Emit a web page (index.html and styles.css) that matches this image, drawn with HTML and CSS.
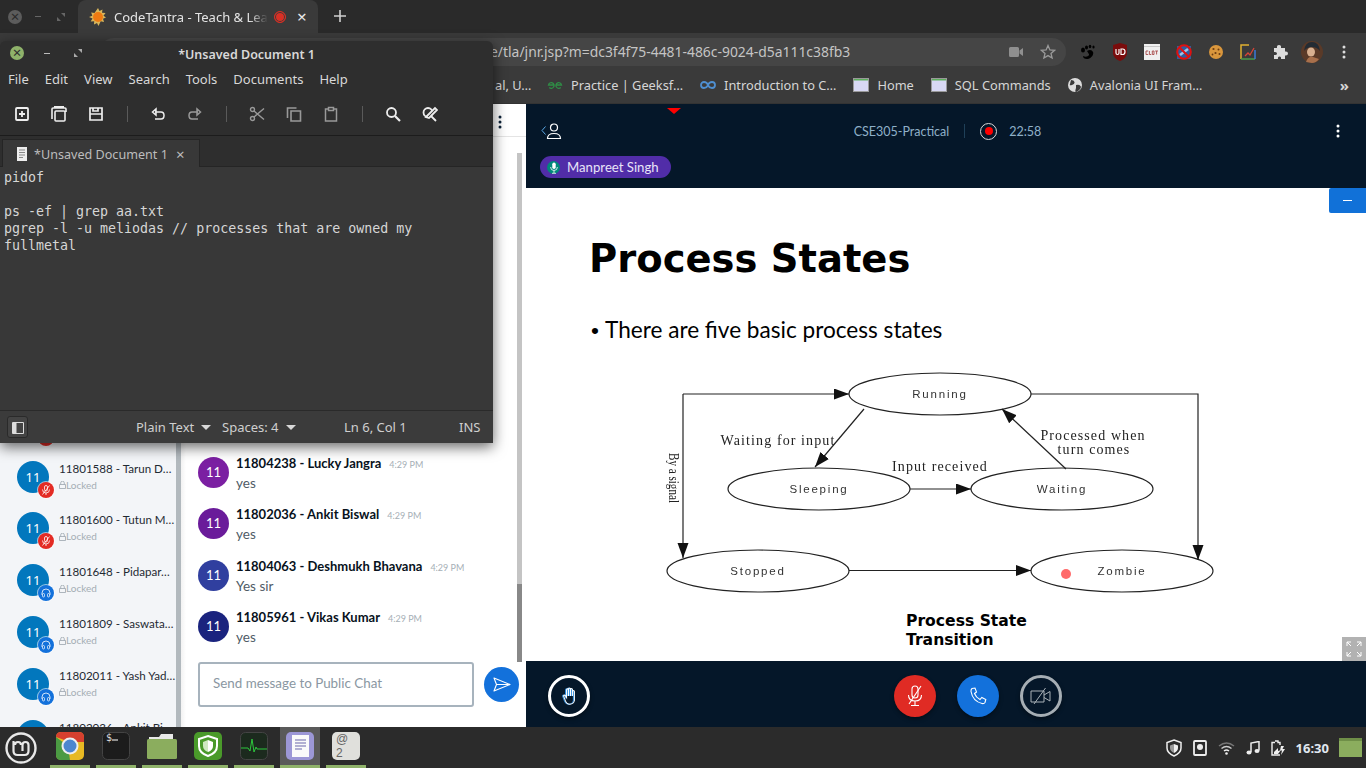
FILE: index.html
```html
<!DOCTYPE html>
<html lang="en">
<head>
    <meta charset="UTF-8">
    <title>CodeTantra - Teach &amp; Learn</title>
    <link rel="stylesheet" href="styles.css">
</head>
<body>
    <div class="browser">
        <div class="tabstrip">
            <div class="win-btns">
                <span class="win-close">&#215;</span>
                <span class="win-min"></span>
                <svg class="win-max" width="8" height="8" viewBox="0 0 8 8"><path d="M4 0h4v4zM0 4l4 4H0z" fill="#666"/></svg>
            </div>
            <div class="tab">
                <svg width="18" height="18" viewBox="0 0 18 18"><path d="M9 0l1.500 3 3-1.500-.5 3.300 3.500.2-2 2.700 2.500 1.800-3 1.200 1 3.200-3.300-.6L9.500 18 8 15l-3 1.500.2-3.300-3.500.2 1.800-2.900L0 9l3.300-1.300-1.100-3.200 3.300.5z" fill="#d9b65a"/><circle cx="9" cy="9" r="5" fill="#ee7a12"/></svg>
                <span class="tab-title">CodeTantra - Teach &amp; Lear</span>
                <span class="tab-rec"></span>
                <span class="tab-x">&#215;</span>
            </div>
            <svg class="new-tab" width="12" height="12" viewBox="0 0 12 12"><path d="M6 0v12M0 6h12" stroke="#d0d0d0" stroke-width="1.600"/></svg>
        </div>

        <div class="addressbar">
            <div class="omnibox">
                <span class="url">e/tla/jnr.jsp?m=dc3f4f75-4481-486c-9024-d5a111c38fb3</span>
                <svg width="14" height="10" viewBox="0 0 14 10"><path d="M0 1.500Q0 0 1.500 0h7Q10 0 10 1.500v7Q10 10 8.500 10h-7Q0 10 0 8.500zM10.500 3.500L14 1v8l-3.500-2.500z" fill="#8f8f8f"/></svg>
                <svg width="16" height="16" viewBox="0 0 16 16"><path d="M8 1.500l1.900 4.400 4.700.4-3.600 3.100 1.100 4.600L8 11.600 3.900 14 5 9.400 1.400 6.300l4.700-.4z" fill="none" stroke="#9a9a9a" stroke-width="1.300"/></svg>
            </div>
            <div class="extensions">
                <svg width="16" height="16" viewBox="0 0 16 16"><path d="M7 7c3-2 5-1 6 1s-1 6-5 7c-3 .5-5-1-5-3 2 1 5 1 6-1 .500-1-1-2-2-4z" fill="#000"/><ellipse cx="3" cy="6" rx="2" ry="2.500" fill="#000"/><ellipse cx="6.500" cy="3.500" rx="1.500" ry="2" fill="#000"/><ellipse cx="10" cy="2.500" rx="1.300" ry="1.700" fill="#000"/><ellipse cx="13.500" cy="3" rx="1.100" ry="1.500" fill="#000"/></svg>
                <svg width="16" height="18" viewBox="0 0 16 18"><path d="M8 0l7 2v8c0 4-4 7-7 8-3-1-7-4-7-8V2z" fill="#7a0c0c"/><path d="M4 6v4q0 1.500 1.500 1.500T7 10V6M9 6v5.500h1.500Q13 11.500 13 8.700T10.500 6z" fill="none" stroke="#fff" stroke-width="1.200"/></svg>
                <svg width="16" height="16" viewBox="0 0 16 16"><rect width="16" height="16" fill="#f0f0f0"/><path d="M0 2.500h16" stroke="#c8c8c8"/><path d="M2 7h2.200M2 7v3.500h2.200M5.400 7v3.500h1.800M8.300 7h1.700v3.500H8.300zM11.200 7H14M12.600 7v3.500" fill="none" stroke="#a84a4a" stroke-width=".9"/></svg>
                <svg width="16" height="16" viewBox="0 0 16 16"><rect x="1" y="2" width="14" height="13" fill="#2f5d9e"/><path d="M4 11l8-6" stroke="#9cc3ea" stroke-width="2.500"/><circle cx="8" cy="8" r="6.800" fill="none" stroke="#e01010" stroke-width="2"/><path d="M3.300 3.300l9.400 9.400" stroke="#e01010" stroke-width="2"/></svg>
                <svg width="16" height="16" viewBox="0 0 16 16"><circle cx="8" cy="8" r="7" fill="#d9963c"/><circle cx="5.500" cy="5" r="1.100" fill="#6b3c12"/><circle cx="10.500" cy="5.500" r="1" fill="#6b3c12"/><circle cx="7.500" cy="9" r="1.100" fill="#6b3c12"/><circle cx="11.500" cy="10" r="1" fill="#6b3c12"/><circle cx="4.500" cy="10.500" r=".9" fill="#6b3c12"/></svg>
                <svg width="16" height="16" viewBox="0 0 16 16"><path d="M9 1H1v14" fill="none" stroke="#e0b030" stroke-width="1.500"/><path d="M1 15h14" fill="none" stroke="#4a9a4a" stroke-width="1.500"/><path d="M15 15V6" fill="none" stroke="#3b78d8" stroke-width="1.500"/><path d="M5 12l3-3 2 2 4-7" fill="none" stroke="#d84437" stroke-width="1.300"/></svg>
                <svg width="16" height="16" viewBox="0 0 16 16"><path d="M2 4h3q-.5-3 2-3t2 3h4v3.500q3-.5 3 2t-3 2V15H9q.5-2.500-1.500-2.500T6 15H2v-4q3 .5 3-1.500T2 8z" fill="#dcdcdc"/></svg>
                <svg class="ext-profile" width="22" height="22" viewBox="0 0 22 22"><circle cx="11" cy="11" r="11" fill="#5a3a28"/><path d="M3 10Q4 1 11 1t8 9q-3-4-8-4t-8 4z" fill="#232b33"/><ellipse cx="10" cy="11" rx="4" ry="4.500" fill="#d8b090"/><path d="M5 21q2-6 7-5l6 2q-3 4-7 4z" fill="#a8704c"/></svg>
                <svg class="ext-menu" width="4" height="14" viewBox="0 0 4 14"><circle cx="2" cy="2" r="1.500" fill="#ddd"/><circle cx="2" cy="7" r="1.500" fill="#ddd"/><circle cx="2" cy="12" r="1.500" fill="#ddd"/></svg>
            </div>
        </div>

        <div class="bookmarks">
            <div class="bm bm-cut">al, U&#8230;</div>
            <div class="bm">
                <svg width="16" height="8" viewBox="0 0 16 8"><path d="M7 4H1.500a2.800 2.800 0 1 1 .8 2.500M9 4h5.500a2.800 2.800 0 1 0-.8 2.500" fill="none" stroke="#2f8d46" stroke-width="1.300"/></svg>
                Practice | Geeksf&#8230;
            </div>
            <div class="bm">
                <svg width="16" height="8" viewBox="0 0 16 8"><path d="M8 4C7 1.500 5.500 1 4 1a3 3 0 0 0 0 6c1.500 0 3-.500 4-3s2.500-3 4-3a3 3 0 0 1 0 6c-1.500 0-3-.500-4-3z" fill="none" stroke="#4f8fd0" stroke-width="1.800"/></svg>
                Introduction to C&#8230;
            </div>
            <div class="bm">
                <svg width="16" height="14" viewBox="0 0 16 14"><use href="#page-icon"/></svg>
                Home
            </div>
            <div class="bm">
                <svg width="16" height="14" viewBox="0 0 16 14"><use href="#page-icon"/></svg>
                SQL Commands
            </div>
            <div class="bm">
                <svg width="14" height="14" viewBox="0 0 14 14"><circle cx="7" cy="7" r="7" fill="#dcdcdc"/><path d="M3 2q3 0 3.500 2T4 7 2 6zM8 7q3-1 4.500 1T10 13 8 10z" fill="#3a3a3a"/></svg>
                Avalonia UI Fram&#8230;
            </div>
            <div class="bm-more">&#187;</div>
        </div>

        <div class="app">
            <aside class="userlist">
                <div class="user">
                    <div class="user-avatar">11<span class="badge badge-muted"><svg width="10" height="10" viewBox="0 0 10 10"><use href="#mic-off"/></svg></span></div>
                </div>
                <div class="user">
                    <div class="user-avatar">11<span class="badge badge-muted"><svg width="10" height="10" viewBox="0 0 10 10"><use href="#mic-off"/></svg></span></div>
                    <div class="user-text"><div class="user-name">11801588 - Tarun D&#8230;</div><div class="user-lock"><svg width="7" height="8" viewBox="0 0 7 8"><use href="#lock"/></svg>Locked</div></div>
                </div>
                <div class="user">
                    <div class="user-avatar">11<span class="badge badge-muted"><svg width="10" height="10" viewBox="0 0 10 10"><use href="#mic-off"/></svg></span></div>
                    <div class="user-text"><div class="user-name">11801600 - Tutun M&#8230;</div><div class="user-lock"><svg width="7" height="8" viewBox="0 0 7 8"><use href="#lock"/></svg>Locked</div></div>
                </div>
                <div class="user">
                    <div class="user-avatar">11<span class="badge badge-listen"><svg width="10" height="10" viewBox="0 0 10 10"><use href="#headset"/></svg></span></div>
                    <div class="user-text"><div class="user-name">11801648 - Pidapar&#8230;</div><div class="user-lock"><svg width="7" height="8" viewBox="0 0 7 8"><use href="#lock"/></svg>Locked</div></div>
                </div>
                <div class="user">
                    <div class="user-avatar">11<span class="badge badge-listen"><svg width="10" height="10" viewBox="0 0 10 10"><use href="#headset"/></svg></span></div>
                    <div class="user-text"><div class="user-name">11801809 - Saswata&#8230;</div><div class="user-lock"><svg width="7" height="8" viewBox="0 0 7 8"><use href="#lock"/></svg>Locked</div></div>
                </div>
                <div class="user">
                    <div class="user-avatar">11<span class="badge badge-listen"><svg width="10" height="10" viewBox="0 0 10 10"><use href="#headset"/></svg></span></div>
                    <div class="user-text"><div class="user-name">11802011 - Yash Yad&#8230;</div><div class="user-lock"><svg width="7" height="8" viewBox="0 0 7 8"><use href="#lock"/></svg>Locked</div></div>
                </div>
                <div class="user">
                    <div class="user-avatar">11</div>
                    <div class="user-text"><div class="user-name">11802036 - Ankit Bi</div><div class="user-lock"><svg width="7" height="8" viewBox="0 0 7 8"><use href="#lock"/></svg>Locked</div></div>
                </div>
            </aside>

            <section class="chat">
                <div class="chat-head">
                    <svg width="4" height="14" viewBox="0 0 4 14"><circle cx="2" cy="2" r="1.500" fill="#0c2238"/><circle cx="2" cy="7" r="1.500" fill="#0c2238"/><circle cx="2" cy="12" r="1.500" fill="#0c2238"/></svg>
                </div>
                <div class="messages">
                    <div class="msg">
                        <div class="msg-avatar av-purple">11</div>
                        <div><div class="msg-top"><b>11804238 - Lucky Jangra</b><span>4:29 PM</span></div><div class="msg-text">yes</div></div>
                    </div>
                    <div class="msg">
                        <div class="msg-avatar av-violet">11</div>
                        <div><div class="msg-top"><b>11802036 - Ankit Biswal</b><span>4:29 PM</span></div><div class="msg-text">yes</div></div>
                    </div>
                    <div class="msg">
                        <div class="msg-avatar av-indigo">11</div>
                        <div><div class="msg-top"><b>11804063 - Deshmukh Bhavana</b><span>4:29 PM</span></div><div class="msg-text">Yes sir</div></div>
                    </div>
                    <div class="msg">
                        <div class="msg-avatar av-navy">11</div>
                        <div><div class="msg-top"><b>11805961 - Vikas Kumar</b><span>4:29 PM</span></div><div class="msg-text">yes</div></div>
                    </div>
                </div>
                <div class="composer">
                    <div class="composer-input">Send message to Public Chat</div>
                    <div class="send-btn">
                        <svg width="18" height="15" viewBox="0 0 18 15"><path d="M1 1l16 6.500L1 14l2.500-6.500zM3.500 7.500H17" fill="none" stroke="#fff" stroke-width="1.100" stroke-linejoin="round"/></svg>
                    </div>
                </div>
                <div class="chat-scroll"><div class="chat-thumb"></div></div>
            </section>

            <main class="meeting">
                <span class="rec-marker"></span>
                <header class="meeting-nav">
                    <div class="nav-row">
                        <svg class="nav-users" width="22" height="16" viewBox="0 0 22 16"><path d="M4.500 3.500L1 7.500l3.500 4" fill="none" stroke="#5aa7e6" stroke-width="1"/><circle cx="13" cy="4.500" r="3.500" fill="none" stroke="#fff" stroke-width="1.200"/><path d="M6.500 15.500q0-5 6.500-5t6.500 5z" fill="none" stroke="#fff" stroke-width="1.200"/></svg>
                        <div class="nav-center">
                            <span class="nav-title">CSE305-Practical</span>
                            <span class="nav-sep"></span>
                            <span class="rec-icon"><span class="rec-dot"></span></span>
                            <span class="nav-time">22:58</span>
                        </div>
                        <svg width="4" height="14" viewBox="0 0 4 14"><circle cx="2" cy="2" r="1.500" fill="#fff"/><circle cx="2" cy="7" r="1.500" fill="#fff"/><circle cx="2" cy="12" r="1.500" fill="#fff"/></svg>
                    </div>
                    <div class="talker">
                        <span class="talker-mic"><svg width="8" height="12" viewBox="0 0 8 12"><rect x="2.300" y="0.500" width="3.400" height="6.500" rx="1.700" fill="#fff"/><path d="M.6 5q0 3.500 3.400 3.500T7.400 5M4 8.500V11M2 11.300h4" fill="none" stroke="#fff" stroke-width=".8"/></svg></span>
                        Manpreet Singh
                    </div>
                </header>

                <div class="slide">
                    <h1>Process States</h1>
                    <p class="bullet">There are five basic process states</p>
                    <svg class="diagram" width="560" height="230" viewBox="660 370 560 230">
                        <defs>
                            <marker id="head" markerWidth="16" markerHeight="12" refX="15" refY="5.500" orient="auto" markerUnits="userSpaceOnUse"><path d="M0 0l15 5.500L0 11z" fill="#111"/></marker>
                        </defs>
                        <g class="lines">
                            <ellipse cx="940" cy="394" rx="91" ry="21"/>
                            <ellipse cx="819" cy="489" rx="91" ry="21"/>
                            <ellipse cx="1062" cy="489" rx="91" ry="21"/>
                            <ellipse cx="758" cy="571" rx="91" ry="21"/>
                            <ellipse cx="1122" cy="571" rx="91" ry="21"/>
                            <path d="M683 394H849" marker-end="url(#head)"/>
                            <path d="M683 394V558" marker-end="url(#head)"/>
                            <path d="M1031 394H1198V560" marker-end="url(#head)"/>
                            <path d="M864 409L815 467" marker-end="url(#head)"/>
                            <path d="M1066 469L1002 409" marker-end="url(#head)"/>
                            <path d="M910 489H971" marker-end="url(#head)"/>
                            <path d="M849 570.500H1031" marker-end="url(#head)"/>
                        </g>
                        <g class="state-names">
                            <text x="940" y="398">Running</text>
                            <text x="819" y="493">Sleeping</text>
                            <text x="1062" y="493">Waiting</text>
                            <text x="758" y="575">Stopped</text>
                            <text x="1122" y="575">Zombie</text>
                        </g>
                        <g class="edge-names">
                            <text x="778" y="445">Waiting for input</text>
                            <text x="940" y="471">Input received</text>
                            <text x="1093" y="440">Processed when</text>
                            <text x="1094" y="454">turn comes</text>
                            <text class="side-label" transform="translate(669 453) rotate(90)" textLength="50" lengthAdjust="spacingAndGlyphs">By a signal</text>
                        </g>
                        <circle cx="1066" cy="574" r="5" fill="#ff6a6a"/>
                    </svg>
                    <div class="caption">Process State<br>Transition</div>
                    <div class="min-btn"></div>
                    <div class="full-btn">
                        <svg width="16" height="16" viewBox="0 0 16 16"><path d="M1 5V1h4M1 1l4 4M15 5V1h-4M15 1l-4 4M1 11v4h4M1 15l4-4M15 11v4h-4M15 15l-4-4" fill="none" stroke="#fff" stroke-width="1"/></svg>
                    </div>
                </div>

                <footer class="actions">
                    <div class="round-btn hand-btn">
                        <svg width="15" height="18" viewBox="0 0 18 22"><path d="M3 12V5.500a1.200 1.200 0 0 1 2.400 0V3a1.200 1.200 0 0 1 2.400 0V2.500a1.200 1.200 0 0 1 2.400 0V3.500a1.200 1.200 0 0 1 2.400 0V13l1.500-2.500c.8-1.200 2.600-.3 2 1L14 17q-1.500 4-5.500 4Q4 21 3 16.500zM5.400 5.500V11M7.800 3V11M10.200 3V11" fill="none" stroke="#fff" stroke-width="1.300"/></svg>
                    </div>
                    <div class="round-btn mic-btn">
                        <svg width="18" height="22" viewBox="0 0 18 22"><rect x="6" y="1" width="6" height="12" rx="3" fill="none" stroke="#fff" stroke-width="1.100"/><path d="M2.500 10q0 6 6.500 6t6.500-6M9 16v4M5 20.500h8M15 1L3 19" fill="none" stroke="#fff" stroke-width="1.100"/></svg>
                    </div>
                    <div class="round-btn phone-btn">
                        <svg width="18" height="18" viewBox="0 0 18 18"><path d="M3 1.500L6 1l1.500 4-2 1.500q1.500 4 5.500 6l1.800-2 4 2-.8 3q-1 1.500-3 1C7 15 3 10 2 4.500q-.2-2 1-3z" fill="none" stroke="#fff" stroke-width="1.100"/></svg>
                    </div>
                    <div class="round-btn cam-btn">
                        <svg width="22" height="18" viewBox="0 0 22 18"><path d="M1 4h13v11H1zM14 8l6-3.500v9.500l-6-3.500M15.500 1L4 17" fill="none" stroke="#aab2b8" stroke-width="1"/></svg>
                    </div>
                </footer>
            </main>
        </div>
    </div>

    <div class="editor">
        <div class="ed-title">
            <div class="ed-btns">
                <span class="ed-close">&#215;</span>
                <span class="ed-min"></span>
                <svg width="8" height="8" viewBox="0 0 8 8"><path d="M4 0h4v4zM0 4l4 4H0z" fill="#aaa"/></svg>
            </div>
            <span class="ed-name">*Unsaved Document 1</span>
        </div>
        <nav class="ed-menu">
            <span>File</span><span>Edit</span><span>View</span><span>Search</span><span>Tools</span><span>Documents</span><span>Help</span>
        </nav>
        <div class="ed-tools">
            <span class="tool"><svg width="16" height="16" viewBox="0 0 16 16"><path d="M3 2h10q1 0 1 1v10q0 1-1 1H3q-1 0-1-1V3q0-1 1-1zM8 5v6M5 8h6" fill="none" stroke="#eee" stroke-width="1.800"/></svg></span>
            <span class="tool"><svg width="16" height="16" viewBox="0 0 16 16"><path d="M1 6V3q0-1 1-1h12q1 0 1 1v3M3 .8h10M5 5h8q1 0 1 1v8q0 1-1 1H5q-1 0-1-1V6q0-1 1-1zM1 4v9" fill="none" stroke="#eee" stroke-width="1.600"/></svg></span>
            <span class="tool"><svg width="16" height="16" viewBox="0 0 16 16"><path d="M2 2h12v12H2zM2 8h12M5 2v3h5V2" fill="none" stroke="#eee" stroke-width="1.700"/></svg></span>
            <span class="tool-sep"></span>
            <span class="tool"><svg width="16" height="16" viewBox="0 0 16 16"><path d="M5 6h6q3 0 3 3.500T11 13H5M2.500 6L6 3v6z" fill="none" stroke="#eee" stroke-width="1.500"/></svg></span>
            <span class="tool"><svg width="16" height="16" viewBox="0 0 16 16"><path d="M11 6H5Q2 6 2 9.500T5 13h6M13.500 6L10 3v6z" fill="none" stroke="#999" stroke-width="1.500"/></svg></span>
            <span class="tool-sep"></span>
            <span class="tool"><svg width="16" height="16" viewBox="0 0 16 16"><circle cx="3.500" cy="3.500" r="2" fill="none" stroke="#999" stroke-width="1.400"/><circle cx="3.500" cy="12.500" r="2" fill="none" stroke="#999" stroke-width="1.400"/><path d="M5 5l10 8.500M5 11L15 2.500" stroke="#999" stroke-width="1.400"/></svg></span>
            <span class="tool"><svg width="16" height="16" viewBox="0 0 16 16"><path d="M1.500 12V2h9M5 5h9.500v10H5z" fill="none" stroke="#999" stroke-width="1.600"/></svg></span>
            <span class="tool"><svg width="16" height="16" viewBox="0 0 16 16"><path d="M5 3H2.500v12h11V3H11M5.500 1.500h5v3h-5z" fill="none" stroke="#999" stroke-width="1.500"/></svg></span>
            <span class="tool-sep"></span>
            <span class="tool"><svg width="16" height="16" viewBox="0 0 16 16"><circle cx="6.500" cy="6.500" r="4.500" fill="none" stroke="#eee" stroke-width="1.800"/><path d="M10 10l5 5" stroke="#eee" stroke-width="2.200"/></svg></span>
            <span class="tool"><svg width="16" height="16" viewBox="0 0 16 16"><circle cx="6" cy="6.500" r="4.500" fill="none" stroke="#eee" stroke-width="1.800"/><path d="M9 10l5 5M4 11L13 2l2 2-8 8z" stroke="#eee" stroke-width="1.800" fill="#2e2e2e"/></svg></span>
        </div>
        <div class="ed-tabs">
            <div class="ed-tab">
                <svg width="10" height="14" viewBox="0 0 10 14"><rect width="10" height="14" fill="#eee"/><path d="M2 3h6M2 5.500h6M2 8h6M2 10.500h4" stroke="#888"/></svg>
                <span>*Unsaved Document 1</span>
                <span class="ed-tab-x">&#215;</span>
            </div>
        </div>
        <pre class="ed-text">pidof

ps -ef | grep aa.txt
pgrep -l -u meliodas // processes that are owned my
fullmetal</pre>
        <div class="ed-status">
            <span class="panel-btn"><svg width="12" height="12" viewBox="0 0 12 12"><path d="M.5.5h11v11H.5z" fill="none" stroke="#ddd"/><path d="M1 1h3.500v10H1z" fill="#ddd"/></svg></span>
            <span class="st-item st-lang">Plain Text<i class="caret"></i></span>
            <span class="st-item st-spaces">Spaces: 4<i class="caret"></i></span>
            <span class="st-item st-pos">Ln 6, Col 1</span>
            <span class="st-item st-ins">INS</span>
        </div>
    </div>

    <div class="taskbar">
        <div class="mint">
            <svg width="32" height="32" viewBox="0 0 32 32"><circle cx="16" cy="16" r="14.500" fill="none" stroke="#e8e8e8" stroke-width="2.400"/><path d="M8.500 9v10q0 4 4 4h7q4 0 4-4v-6q0-3-3-3t-3 3v6M16 13q0-3-3-3t-3 3" fill="none" stroke="#e8e8e8" stroke-width="2.200"/></svg>
        </div>
        <div class="launcher">
            <div class="app-icon">
                <svg width="28" height="28" viewBox="0 0 28 28"><rect width="28" height="28" rx="5" fill="#e8b923"/><path d="M0 5q0-5 5-5h18q5 0 5 5v5H14z" fill="#d6402f"/><path d="M0 5v18q0 5 5 5h9l-2-14z" fill="#4b9b43"/><circle cx="14" cy="14" r="7.500" fill="#4d86cf" stroke="#eee" stroke-width="2"/></svg>
            </div>
            <div class="app-icon">
                <svg width="28" height="28" viewBox="0 0 28 28"><rect x=".5" y=".5" width="27" height="27" rx="5" fill="#1c1c1c" stroke="#444"/><path d="M10 8h6" stroke="#ddd" stroke-width="1.200"/></svg>
                <span class="term-txt">$</span>
            </div>
            <div class="app-icon">
                <svg width="30" height="26" viewBox="0 0 30 26"><path d="M2 4h10l2-3h12v5H2z" fill="#e8e8e8"/><rect x="0" y="6" width="30" height="20" rx="1.500" fill="#8bad5e"/></svg>
            </div>
            <div class="app-icon">
                <svg width="28" height="28" viewBox="0 0 28 28"><rect width="28" height="28" rx="5" fill="#4a9a2a"/><path d="M14 4l9 3v7q0 7-9 10-9-3-9-10V7z" fill="none" stroke="#fff" stroke-width="2"/><path d="M14 8l5 2v4q0 4-5 6z" fill="#fff"/><path d="M14 8l-5 2v4q0 4 5 6z" fill="#cfe8c0"/></svg>
            </div>
            <div class="app-icon">
                <svg width="28" height="28" viewBox="0 0 28 28"><rect x=".5" y=".5" width="27" height="27" rx="5" fill="#1c2a1e" stroke="#444"/><path d="M1 16h7l2 3 2-12 2 13 2-5 1 2h10" fill="none" stroke="#2dc83c" stroke-width="1"/></svg>
            </div>
            <div class="app-icon app-active">
                <svg width="28" height="28" viewBox="0 0 28 28"><rect width="28" height="28" rx="5" fill="#9c97d6"/><rect x="6" y="3" width="17" height="22" fill="#fafafa"/><path d="M9 8h11M9 11h11M9 14h11M9 17h7" stroke="#6a66aa"/></svg>
            </div>
            <div class="app-icon">
                <div class="at-tile"><span>@</span><span>2</span></div>
            </div>
        </div>
        <div class="tray">
            <svg width="16" height="18" viewBox="0 0 16 18"><path d="M8 1l7 2.500V9q0 5-7 8-7-3-7-8V3.500z" fill="none" stroke="#eee" stroke-width="1.500"/><path d="M8 5l4 1.500V9q0 3-4 5z" fill="#eee"/><path d="M8 5L4 6.500V9q0 3 4 5z" fill="#999"/></svg>
            <svg width="14" height="16" viewBox="0 0 14 16"><rect x="1" y="1" width="12" height="14" rx="1" fill="none" stroke="#eee" stroke-width="1.800"/><circle cx="7" cy="7" r="3" fill="#eee"/></svg>
            <svg width="17" height="14" viewBox="0 0 17 14"><path d="M1 5q7.500-6 15 0" fill="none" stroke="#777" stroke-width="1.500"/><path d="M3.500 7.500q5-4 10 0" fill="none" stroke="#ccc" stroke-width="1.500"/><path d="M6 10q2.500-2 5 0" fill="none" stroke="#eee" stroke-width="1.500"/><circle cx="8.500" cy="12.500" r="1.300" fill="#eee"/></svg>
            <svg width="14" height="14" viewBox="0 0 14 14"><path d="M5 11V2l8-1.500V9.500" fill="none" stroke="#eee" stroke-width="1.500"/><ellipse cx="3" cy="11.500" rx="2.500" ry="2" fill="#eee"/><ellipse cx="11" cy="10" rx="2.500" ry="2" fill="#eee"/></svg>
            <svg width="14" height="16" viewBox="0 0 14 16"><path d="M4 1h3v1.500h2V5M9 15H1V2.500h3" fill="none" stroke="#eee" stroke-width="1.400"/><path d="M3 12l4-4v3l3-1-3 4h-4z" fill="#eee"/><path d="M10 6l3 0-1.500 3H14l-4 6 1-4.500H9z" fill="#eee"/></svg>
            <span class="clock">16:30</span>
            <div class="workspace"></div>
        </div>
    </div>

    <svg class="defs" width="0" height="0">
        <symbol id="page-icon" viewBox="0 0 16 14"><rect x=".5" y=".5" width="15" height="13" fill="#d8d8f4" stroke="#9a9a9a"/><rect x="1" y="1" width="14" height="1.500" fill="#5dae5d"/></symbol>
        <symbol id="lock" viewBox="0 0 7 8"><path d="M.5 3.500h6v4h-6zM1.700 3.500V2a1.800 1.800 0 0 1 3.600 0v1.500" fill="none" stroke="#9aa5ad" stroke-width=".8"/></symbol>
        <symbol id="mic-off" viewBox="0 0 10 10"><rect x="3.500" y=".5" width="3" height="5.500" rx="1.500" fill="none" stroke="#fff" stroke-width=".8"/><path d="M1.500 4.500Q1.500 8 5 8t3.500-3.500M5 8v2M8.500.5l-7 9" fill="none" stroke="#fff" stroke-width=".8"/></symbol>
        <symbol id="headset" viewBox="0 0 10 10"><path d="M1 7V5a4 4 0 0 1 8 0v2" fill="none" stroke="#fff" stroke-width=".8"/><rect x="1.500" y="5.500" width="2" height="3.500" rx="1" fill="none" stroke="#fff" stroke-width=".7"/><rect x="6.500" y="5.500" width="2" height="3.500" rx="1" fill="none" stroke="#fff" stroke-width=".7"/></symbol>
    </svg>
</body>
</html>
```

FILE: styles.css
```css
* {
    box-sizing: border-box;
}
body {
    margin: 0;
    width: 1366px;
    height: 768px;
    overflow: hidden;
    position: relative;
    display: flex;
    flex-direction: column;
    background: #2b2b2b;
    font-family: "Noto Sans", sans-serif;
}
svg {
    display: block;
    flex: none;
}
.defs {
    position: absolute;
}

/* browser chrome */
.browser {
    height: 727px;
    display: flex;
    flex-direction: column;
}
.tabstrip {
    height: 33px;
    display: flex;
    align-items: flex-end;
    background: #2a2a2a;
}
.win-btns {
    width: 78px;
    height: 33px;
    padding-left: 8px;
    display: flex;
    align-items: center;
}
.win-close {
    width: 14px;
    height: 14px;
    border-radius: 50%;
    background: #5c5c5c;
    color: #2a2a2a;
    font-size: 15px;
    line-height: 13px;
    text-align: center;
}
.win-min {
    width: 6px;
    height: 1px;
    margin-left: 13px;
    background: #666;
}
.win-max {
    margin-left: 16px;
}
.tab {
    width: 240px;
    height: 33px;
    padding-left: 11px;
    display: flex;
    align-items: center;
    background: #3a3a3a;
    border-radius: 8px 8px 0 0;
    color: #e4e4e4;
    font-size: 13px;
}
.tab-title {
    width: 154px;
    margin-left: 7px;
    flex: none;
    white-space: nowrap;
    overflow: hidden;
    -webkit-mask-image: linear-gradient(to right, #000 88%, transparent);
    mask-image: linear-gradient(to right, #000 88%, transparent);
}
.tab-rec {
    width: 12px;
    height: 12px;
    margin-left: 6px;
    flex: none;
    border-radius: 50%;
    background: #d93025;
    border: 1px solid #d93025;
    box-shadow: inset 0 0 0 1px #3a3a3a;
}
.tab-x {
    margin-left: 11px;
    font-size: 17px;
    line-height: 1;
    color: #e8e8e8;
}
.new-tab {
    margin: 0 0 11px 16px;
}
.addressbar {
    height: 37px;
    display: flex;
    align-items: center;
    background: #3a3a3a;
}
.omnibox {
    width: 966px;
    height: 28px;
    margin-left: 100px;
    padding-left: 390px;
    display: flex;
    align-items: center;
    background: #454545;
    border-radius: 14px;
}
.url {
    width: 519px;
    color: #c4c4c4;
    font-size: 13.900px;
    white-space: nowrap;
}
.omnibox svg:last-of-type {
    margin-left: 17px;
}
.extensions {
    display: flex;
    align-items: center;
}
.extensions svg {
    margin-left: 16px;
}
.extensions svg:first-child {
    margin-left: 14px;
}
.extensions .ext-profile {
    margin-left: 13px;
}
.extensions .ext-menu {
    margin-left: 19px;
}
.bookmarks {
    height: 34px;
    padding: 0 0 3px 495px;
    display: flex;
    align-items: center;
    background: #3a3a3a;
    border-bottom: 1px solid #333;
    color: #d6d6d6;
    font-size: 12.800px;
}
.bm {
    display: flex;
    align-items: center;
    gap: 8px;
    margin-right: 17px;
    white-space: nowrap;
}
.bm-cut {
    width: 33px;
    margin-right: 19px;
}
.bm-more {
    margin-left: auto;
    margin-right: 17px;
    font-size: 15px;
    font-weight: bold;
}

/* meeting page */
.app {
    flex: 1;
    min-height: 0;
    display: flex;
    background: #fff;
}
.userlist {
    width: 181px;
    margin-top: 268px;
    padding-top: 27px;
    background: #f3f5f8;
    border-right: 5px solid #b2b9be;
    overflow: hidden;
    height: 355px;
}
.user {
    height: 51.800px;
    padding-left: 17px;
    display: flex;
    align-items: center;
    gap: 10px;
}
.user-avatar {
    position: relative;
    width: 32px;
    height: 32px;
    border-radius: 50%;
    background: #0277bd;
    color: #fff;
    font-size: 13px;
    line-height: 32px;
    text-align: center;
    flex: none;
}
.badge {
    position: absolute;
    right: -5px;
    bottom: -5px;
    width: 16px;
    height: 16px;
    padding: 3px;
    border-radius: 50%;
    box-shadow: 0 0 0 1px rgba(255, 255, 255, 0.6);
}
.badge-muted {
    background: #e32b24;
}
.badge-listen {
    background: #1371db;
}
.user-text {
    width: 116px;
    margin-top: 0;
}
.user-name {
    font-family: Lato, sans-serif;
    font-size: 11.600px;
    line-height: 17px;
    color: #1f2a33;
    white-space: nowrap;
}
.user-lock {
    display: flex;
    align-items: center;
    font-family: Lato, sans-serif;
    font-size: 10px;
    line-height: 17px;
    color: #a4adb4;
}
.chat {
    position: relative;
    width: 345px;
    display: flex;
    flex-direction: column;
    background: linear-gradient(to right, #f2f2f2, #fff 5px);
    font-family: Lato, sans-serif;
}
.chat-head {
    height: 33px;
    padding: 11px 0 0 317px;
    flex: none;
    border-bottom: 1px solid #e4e4e4;
}
.messages {
    flex: 1;
    padding: 0 0 10px 17px;
    display: flex;
    flex-direction: column;
    justify-content: flex-end;
}
.msg {
    height: 51.200px;
    display: flex;
    gap: 7px;
    padding-top: 8px;
}
.msg-avatar {
    width: 31px;
    height: 31px;
    margin-top: 2px;
    border-radius: 50%;
    color: #fff;
    font-size: 13px;
    line-height: 31px;
    text-align: center;
    flex: none;
}
.av-purple {
    background: #7b1fa2;
}
.av-violet {
    background: #6a1b9a;
}
.av-indigo {
    background: #303f9f;
}
.av-navy {
    background: #1a237e;
}
.msg-top {
    display: flex;
    align-items: baseline;
    gap: 8px;
    font-size: 13px;
    line-height: 17px;
}
.msg-top b {
    color: #08121c;
}
.msg-top span {
    color: #a6afb6;
    font-size: 9px;
}
.msg-text {
    margin-top: 2px;
    font-size: 13.500px;
    line-height: 17px;
    color: #4f5b66;
}
.composer {
    height: 65px;
    padding-left: 17px;
    display: flex;
    align-items: flex-start;
    flex: none;
}
.composer-input {
    width: 276px;
    height: 45px;
    padding-left: 13px;
    border: 2px solid #a7b3bd;
    border-radius: 3px;
    color: #8a97a2;
    font-size: 13.400px;
    line-height: 38px;
}
.send-btn {
    width: 35px;
    height: 35px;
    margin: 5px 0 0 10px;
    padding: 10px 0 0 9px;
    border-radius: 50%;
    background: #1371db;
}
.chat-scroll {
    position: absolute;
    top: 49px;
    right: 4px;
    width: 5px;
    height: 509px;
    background: #c4c4c4;
}
.chat-thumb {
    position: absolute;
    bottom: 0;
    width: 5px;
    height: 78px;
    background: #888;
}
.meeting {
    position: relative;
    flex: 1;
    min-width: 0;
    display: flex;
    flex-direction: column;
    margin-left: 0;
}
.rec-marker {
    position: absolute;
    top: 4px;
    left: 141px;
    border-left: 7px solid transparent;
    border-right: 7px solid transparent;
    border-top: 6px solid #f00;
}
.meeting-nav {
    height: 84px;
    padding: 16px 26px 0 15px;
    background: #051729;
}
.nav-row {
    display: flex;
    align-items: center;
    justify-content: space-between;
    height: 22px;
}
.nav-center {
    display: flex;
    align-items: center;
    margin-left: -4px;
    color: #8fb0c8;
    font-family: Lato, sans-serif;
    font-size: 12.500px;
}
.nav-sep {
    width: 1px;
    height: 14px;
    margin: 0 15px;
    background: #1f4058;
}
.rec-icon {
    width: 17px;
    height: 17px;
    padding: 3.500px;
    border: 1px solid #d8d8d8;
    border-radius: 50%;
}
.rec-dot {
    display: block;
    width: 8px;
    height: 8px;
    border-radius: 50%;
    background: #f00;
}
.nav-time {
    margin-left: 12px;
}
.talker {
    width: 131px;
    height: 22px;
    margin: 14px 0 0 -1px;
    padding-left: 7px;
    display: flex;
    align-items: center;
    gap: 7px;
    border-radius: 11px;
    background: #512da8;
    color: #e8e4f8;
    font-family: Lato, sans-serif;
    font-size: 13.200px;
}
.talker-mic {
    width: 13px;
    height: 13px;
    padding: 1px 0 0 2.500px;
    border-radius: 50%;
    background: #00897b;
    flex: none;
}
.slide {
    position: relative;
    flex: 1;
    min-height: 0;
    padding: 48px 0 0 63px;
    background: #fff;
}
.slide h1 {
    margin: 0;
    font-family: "DejaVu Sans", sans-serif;
    font-size: 38.500px;
    line-height: 46px;
    color: #000;
}
.bullet {
    margin: 33px 0 0 2px;
    font-family: Lato, sans-serif;
    font-size: 22.600px;
    line-height: 30px;
    color: #000;
}
.bullet::before {
    content: "\2022";
    display: inline-block;
    width: 14px;
    font-family: "Liberation Sans", sans-serif;
}
.diagram {
    margin: 24px 0 0 71px;
    filter: blur(.3px);
}
.lines {
    fill: none;
    stroke: #222;
    stroke-width: 1.200;
}
.state-names text {
    font-family: "Liberation Sans", sans-serif;
    font-size: 11.500px;
    letter-spacing: 1.800px;
    text-anchor: middle;
    fill: #333;
}
.edge-names text {
    font-family: "Liberation Serif", serif;
    font-size: 14px;
    letter-spacing: 1.100px;
    text-anchor: middle;
    fill: #222;
}
.edge-names .side-label {
    font-size: 15px;
    letter-spacing: 0;
    text-anchor: start;
}
.caption {
    margin: 12px 0 0 317px;
    font-family: "DejaVu Sans", sans-serif;
    font-size: 15.600px;
    font-weight: bold;
    line-height: 19px;
    color: #000;
}
.min-btn {
    position: absolute;
    top: 0;
    right: 0;
    width: 37px;
    height: 25px;
    border-radius: 2px 0 0 2px;
    background: #1171d8;
}
.min-btn::after {
    content: "";
    position: absolute;
    left: 14px;
    top: 12px;
    width: 9px;
    height: 1px;
    background: #fff;
}
.full-btn {
    position: absolute;
    right: 0;
    bottom: 0;
    width: 24px;
    height: 24px;
    padding: 4px;
    background: #b2b2b2;
}
.actions {
    height: 66px;
    padding: 14px 0 0 22px;
    display: flex;
    gap: 21px;
    background: #051729;
}
.round-btn {
    width: 42px;
    height: 42px;
    display: flex;
    align-items: center;
    justify-content: center;
    border-radius: 50%;
    box-shadow: 0 2px 4px rgba(0, 0, 0, 0.4);
}
.hand-btn {
    margin-right: 283px;
    border: 3px solid #fff;
}
.hand-btn svg {
    transform: scaleX(-1);
    filter: drop-shadow(1px 0 0 #2f8fe0);
}
.mic-btn {
    background: #e02b24;
}
.phone-btn {
    background: #1371db;
}
.cam-btn {
    border: 3px solid #a6aeb4;
}

/* editor window */
.editor {
    position: absolute;
    left: 0;
    top: 41px;
    width: 493px;
    height: 402px;
    display: flex;
    flex-direction: column;
    background: #2e2e2e;
    border-radius: 6px 6px 0 0;
    box-shadow: 0 4px 14px rgba(0, 0, 0, 0.6);
    color: #d8d8d8;
    font-size: 13px;
}
.ed-title {
    position: relative;
    height: 26px;
    display: flex;
    align-items: center;
    justify-content: center;
    flex: none;
}
.ed-btns {
    position: absolute;
    left: 10px;
    top: 5px;
    display: flex;
    align-items: center;
}
.ed-close {
    width: 14px;
    height: 14px;
    border-radius: 50%;
    background: #8fb26a;
    color: #2e2e2e;
    font-size: 15px;
    line-height: 13px;
    text-align: center;
}
.ed-min {
    width: 6px;
    height: 1px;
    margin: 0 24px 0 20px;
    background: #bbb;
}
.ed-name {
    font-weight: 600;
    color: #d8d8d8;
    font-size: 12.500px;
}
.ed-menu {
    height: 23px;
    padding-left: 8px;
    display: flex;
    align-items: center;
    gap: 16px;
    flex: none;
}
.ed-tools {
    height: 46px;
    padding: 2px 0 0 3.500px;
    display: flex;
    align-items: center;
    flex: none;
    border-bottom: 1px solid #1c1c1c;
}
.tool {
    width: 37px;
    display: flex;
    justify-content: center;
}
.tool-sep {
    width: 1px;
    height: 16px;
    margin: 0 12px;
    background: #5a5a5a;
}
.ed-tabs {
    height: 31px;
    padding: 3px 0 0 2px;
    flex: none;
    border-bottom: 1px solid #252525;
}
.ed-tab {
    width: 198px;
    height: 28px;
    padding: 1px 0 0 14px;
    display: flex;
    align-items: center;
    background: #383838;
    border: 1px solid #252525;
    border-bottom: 0;
    color: #bdbdbd;
    font-size: 12.600px;
}
.ed-tab span:first-of-type {
    margin-left: 7px;
}
.ed-tab-x {
    margin-left: 8px;
    font-size: 15px;
}
.ed-text {
    flex: 1;
    margin: 0;
    padding: 2px 4px;
    background: #383838;
    color: #d6d6d6;
    font-family: "DejaVu Sans Mono", monospace;
    font-size: 13.300px;
    line-height: 17px;
}
.ed-status {
    position: relative;
    height: 33px;
    background: #3b3b3b;
    border-top: 1px solid #2a2a2a;
    flex: none;
}
.panel-btn {
    position: absolute;
    left: 7px;
    top: 5px;
    width: 21px;
    height: 22px;
    padding: 5px 4px;
    border: 1px solid #2a2a2a;
    border-radius: 3px;
    background: #444;
}
.st-item {
    position: absolute;
    top: 7px;
    line-height: 18px;
    color: #cfcfcf;
}
.st-lang {
    left: 136px;
}
.st-spaces {
    left: 222px;
}
.st-pos {
    left: 344px;
}
.st-ins {
    left: 459px;
}
.caret {
    display: inline-block;
    margin-left: 7px;
    vertical-align: 2px;
    border-left: 5px solid transparent;
    border-right: 5px solid transparent;
    border-top: 5px solid #d8d8d8;
}

/* mint panel */
.taskbar {
    position: relative;
    height: 41px;
    display: flex;
    align-items: center;
    background: #2b2b2b;
}
.mint {
    width: 50px;
    padding-left: 5px;
}
.launcher {
    display: flex;
    gap: 6px;
    height: 41px;
}
.app-icon {
    position: relative;
    width: 40px;
    height: 41px;
    display: flex;
    align-items: center;
    justify-content: center;
    border-bottom: 3px solid #8fb26a;
}
.app-active {
    background: #5a5a5a;
}
.term-txt {
    position: absolute;
    left: 10px;
    top: 5px;
    color: #ddd;
    font-family: "DejaVu Sans Mono", monospace;
    font-size: 10px;
}
.at-tile {
    width: 28px;
    height: 28px;
    padding-left: 4px;
    display: flex;
    flex-direction: column;
    border-radius: 5px;
    background: #e0e0dc;
    color: #666;
    font-family: "Liberation Sans", sans-serif;
    font-size: 12px;
    line-height: 14px;
}
.tray {
    margin-left: auto;
    display: flex;
    align-items: center;
    height: 41px;
    gap: 11px;
    padding-right: 4px;
}
.clock {
    color: #e0e8f0;
    font-size: 13px;
    font-weight: 700;
}
.workspace {
    width: 23px;
    height: 19px;
    margin-left: -1px;
    background: #8bad5e;
    border-top: 3px solid #6f8f48;
}
```
